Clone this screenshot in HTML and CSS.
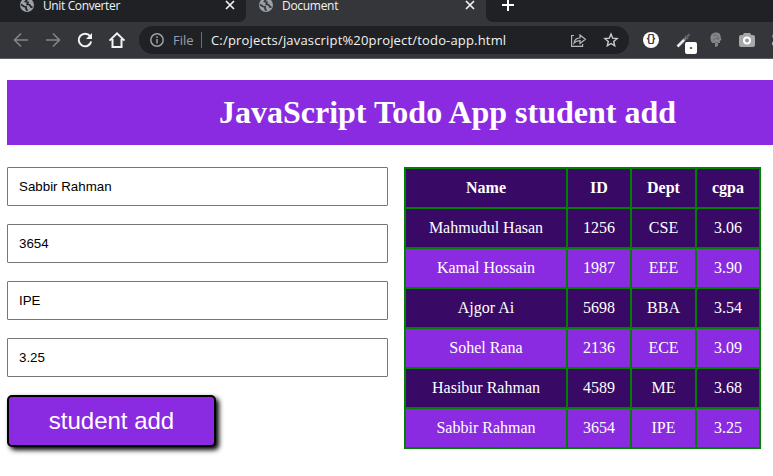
FILE: index.html
```html
<!DOCTYPE html>
<html lang="en">
<head>
<meta charset="utf-8">
<title>Document</title>
<link rel="stylesheet" href="styles.css">
</head>
<body>
<header class="browser">
  <div class="tabs">
    <div class="tab">
      <svg class="globe" viewBox="0 0 14 14"><circle cx="7" cy="7" r="7" fill="#9aa0a6"/><path d="M1 6.500 4 8.500l2 .3v2l1.500 1.800M7.500 1.200 5.500 3.500 8 4.300 7.200 6.300l2.300.4 1.700 2.600 1.300-.5" fill="none" stroke="#202124" stroke-width="1.700"/></svg>
      <span class="tab-title unit">Unit Converter</span>
      <svg class="close" viewBox="0 0 8 8"><path d="m0 0 8 8M8 0 0 8"/></svg>
    </div>
    <div class="tab active">
      <svg class="globe" viewBox="0 0 14 14"><circle cx="7" cy="7" r="7" fill="#9aa0a6"/><path d="M1 6.500 4 8.500l2 .3v2l1.500 1.800M7.500 1.200 5.500 3.500 8 4.300 7.200 6.300l2.300.4 1.700 2.600 1.300-.5" fill="none" stroke="#35363a" stroke-width="1.700"/></svg>
      <span class="tab-title doc">Document</span>
      <svg class="close" viewBox="0 0 8 8"><path d="m0 0 8 8M8 0 0 8"/></svg>
    </div>
    <div class="strip"><svg class="plus" viewBox="0 0 12 12"><path d="M6 0v12M0 6h12"/></svg></div>
  </div>
  <div class="toolbar">
    <nav class="nav">
      <svg class="dim" viewBox="0 0 16 16"><path d="M15 8H2M8 1.500 1.500 8 8 14.500"/></svg>
      <svg class="dim" viewBox="0 0 16 16"><path d="M1 8h13M8 1.500 14.500 8 8 14.500"/></svg>
      <svg viewBox="0 0 16 16"><path d="M13.100 4.200A6.300 6.300 0 1 0 14.200 9.500"/><path d="M15 1v6H9z" fill="#f1f3f4" stroke="none"/></svg>
      <svg viewBox="0 0 16 16"><path d="M.5 8.600 8 1.300l7.500 7.300M3.500 7v8h9V7"/></svg>
    </nav>
    <div class="address">
      <svg class="info" viewBox="0 0 14 14"><circle cx="7" cy="7" r="6.200"/><path d="M7 6v4.500M7 3.300V5"/></svg>
      <span class="scheme">File</span>
      <span class="bar"></span>
      <span class="url">C:/projects/javascript%20project/todo-app.html</span>
      <svg class="share" viewBox="0 0 15 14"><path d="M3 2.500H.6v10.900h11V11M3 10c.6-3.400 2.400-5 6-5V2L14.400 6.200 9 10.400V7.700C6.400 7.700 4.500 8.300 3 10z"/></svg>
      <svg class="star" viewBox="0 0 14 14"><path d="m7 1 1.650 4.100 4.500.400-3.450 2.900 1 4.400L7 10.500l-3.700 2.300 1-4.400L.85 5.500l4.500-.400z"/></svg>
    </div>
    <div class="extensions">
      <span class="badge-font">{}</span>
      <span class="picker"><svg viewBox="0 0 15 15"><path d="m1.500 13.500 7-7" stroke="#e8eaed" stroke-width="2.600"/><path d="m8 7 3.500-3.500" stroke="#80868b" stroke-width="2"/><path d="m9 3 3 3M11 4l2.500-3" stroke="#5f6368" stroke-width="2"/></svg><b>·</b></span>
      <svg class="head" viewBox="0 0 12 16"><path d="M6 .5C2.500.5.5 2.800.5 6c0 2 .6 3.700 1.800 5H5v4l3-1v-3h2l-.2-2.300 1.700-.6-.8-2.700C10.700 2.400 9.300.5 6 .5z" fill="#85888b"/><path d="M3 4c2-2 5-1 5 1S3 6 3.500 8.500M7 7.500l2.500-1M5.500 10l2.500 1" fill="none" stroke="#606266" stroke-width="1"/></svg>
      <svg class="camera" viewBox="0 0 16 14"><path d="M5 0h6l1.300 2H14a2 2 0 0 1 2 2v8a2 2 0 0 1-2 2H2a2 2 0 0 1-2-2V4a2 2 0 0 1 2-2h1.700z" fill="#a7a8aa"/><circle cx="8" cy="7.500" r="3" fill="#96989a" stroke="#fff" stroke-width="2"/></svg>
      <svg class="puzzle" viewBox="0 0 2 12"><path d="M2 0H1L0 3l2 1v4H0v3l2 1" fill="#a7a8aa"/></svg>
    </div>
  </div>
</header>
<main>
  <h1>JavaScript Todo App student add</h1>
  <div class="content">
    <form>
      <input type="text" value="Sabbir Rahman">
      <input type="text" value="3654">
      <input type="text" value="IPE">
      <input type="text" value="3.25">
      <button type="button">student add</button>
    </form>
    <table>
      <colgroup><col class="c-name"><col class="c-id"><col class="c-dept"><col class="c-cgpa"></colgroup>
      <tr><th>Name</th><th>ID</th><th>Dept</th><th>cgpa</th></tr>
      <tr><td>Mahmudul Hasan</td><td>1256</td><td>CSE</td><td>3.06</td></tr>
      <tr><td>Kamal Hossain</td><td>1987</td><td>EEE</td><td>3.90</td></tr>
      <tr><td>Ajgor Ai</td><td>5698</td><td>BBA</td><td>3.54</td></tr>
      <tr><td>Sohel Rana</td><td>2136</td><td>ECE</td><td>3.09</td></tr>
      <tr><td>Hasibur Rahman</td><td>4589</td><td>ME</td><td>3.68</td></tr>
      <tr><td>Sabbir Rahman</td><td>3654</td><td>IPE</td><td>3.25</td></tr>
    </table>
  </div>
</main>
</body>
</html>
```
FILE: styles.css
```css
* { box-sizing: border-box; }
html, body { height: 476px; overflow: hidden; }
body { margin: 0; background: #fff; font-family: "Liberation Serif", serif; }
svg { display: block; flex: none; overflow: visible; }

.browser { height: 59px; overflow: hidden; background: #35363a; border-bottom: 1px solid #5c5d60; font-family: "Open Sans", sans-serif; color: #f1f3f4; }
.tabs { height: 22px; display: flex; background: #35363a; }
.tab { width: 246px; height: 22px; padding-left: 20px; display: flex; flex: none; background: #202124; border-bottom-right-radius: 7px; }
.tab.active { width: 240px; padding-left: 13px; background: #35363a; }
.globe { width: 14px; height: 14px; margin-top: -2px; }
.tab-title { margin: 0 0 0 9px; width: 184px; height: 11px; font-size: 12px; line-height: 11px; white-space: nowrap; }
.unit { letter-spacing: -0.38px; width: 183px; }
.doc { letter-spacing: -0.3px; }
.close { width: 8px; height: 8px; margin-top: 1px; fill: none; stroke: #f1f3f4; stroke-width: 1.7; }
.strip { flex: 1; padding: 0 0 0 16px; background: #202124; border-bottom-left-radius: 7px; }
.plus { width: 12px; height: 12px; margin-top: -1px; fill: none; stroke: #fff; stroke-width: 2; }

.toolbar { height: 36px; display: flex; align-items: center; }
.nav { width: 139px; padding-left: 13px; display: flex; flex: none; gap: 16px; }
.nav svg { width: 16px; height: 16px; fill: none; stroke: #f1f3f4; stroke-width: 2; }
.nav .dim { stroke: #85868a; stroke-width: 1.6; }
.address { width: 490px; height: 28px; padding-left: 11px; display: flex; flex: none; align-items: center; background: #202124; border-radius: 14px; font-size: 14px; }
.info { width: 14px; height: 14px; fill: none; stroke: #9aa0a6; stroke-width: 1.5; }
.scheme { width: 28px; margin-left: 9px; color: #9aa0a6; font-size: 13px; }
.bar { width: 1px; height: 16px; background: #6b6e72; }
.url { width: 360px; margin-left: 9px; font-size: 13px; letter-spacing: 0.17px; white-space: nowrap; }
.share { width: 15px; height: 14px; fill: none; stroke: #b5b7ba; stroke-width: 1.2; }
.star { width: 14px; height: 14px; margin-left: 18px; fill: none; stroke: #c8cacc; stroke-width: 1.4; }
.extensions { display: flex; flex: none; align-items: center; margin-left: 14px; }
.badge-font { width: 16px; height: 16px; border-radius: 50%; background: #fff; color: #333; font: bold 10px/15px "Liberation Mono", monospace; letter-spacing: -2px; text-indent: -2px; text-align: center; }
.picker { position: relative; width: 21px; margin-left: 17px; }
.picker svg { width: 15px; height: 15px; fill: none; }
.picker b { position: absolute; left: 9px; top: 9px; width: 12px; height: 12px; border-radius: 2px; background: #fff; color: #333; font-size: 12px; line-height: 12px; text-align: center; }
.head { width: 12px; height: 16px; margin-left: 13px; }
.camera { width: 16px; height: 14px; margin-left: 17px; }
.puzzle { width: 2px; height: 12px; margin-left: 17px; }

main { padding: 21px 0 0 7px; overflow: hidden; }
h1 { width: 881px; height: 65px; margin: 0; background: blueviolet; color: #fff; font-size: 32px; line-height: 65px; text-align: center; }
.content { display: flex; align-items: flex-start; gap: 16px; height: 309px; margin-top: 22px; }
form { width: 381px; display: flex; flex-direction: column; gap: 18px; }
input { width: 381px; height: 39px; padding: 0 11px; border: 1px solid #767676; border-radius: 1px; font: 13.333px "Liberation Sans", sans-serif; letter-spacing: 0; color: #000; background: #fff; }
button { width: 209px; height: 52px; padding: 0; border: 2px solid #000; border-radius: 5px; background: blueviolet; color: #fff; font: 24px "Liberation Sans", sans-serif; box-shadow: 3px 3px 5px #000; }
table { width: 357px; flex: none; table-layout: fixed; border-collapse: collapse; color: #fff; font-size: 16px; text-align: center; }
.c-name { width: 162px; }
.c-id { width: 64px; }
.c-dept { width: 65px; }
.c-cgpa { width: 64px; }
tr { height: 40px; background: #380a65; }
tr:nth-child(odd) { background: blueviolet; }
tr:first-child { background: #380a65; }
th, td { padding: 0; border: 2px solid green; }
```
